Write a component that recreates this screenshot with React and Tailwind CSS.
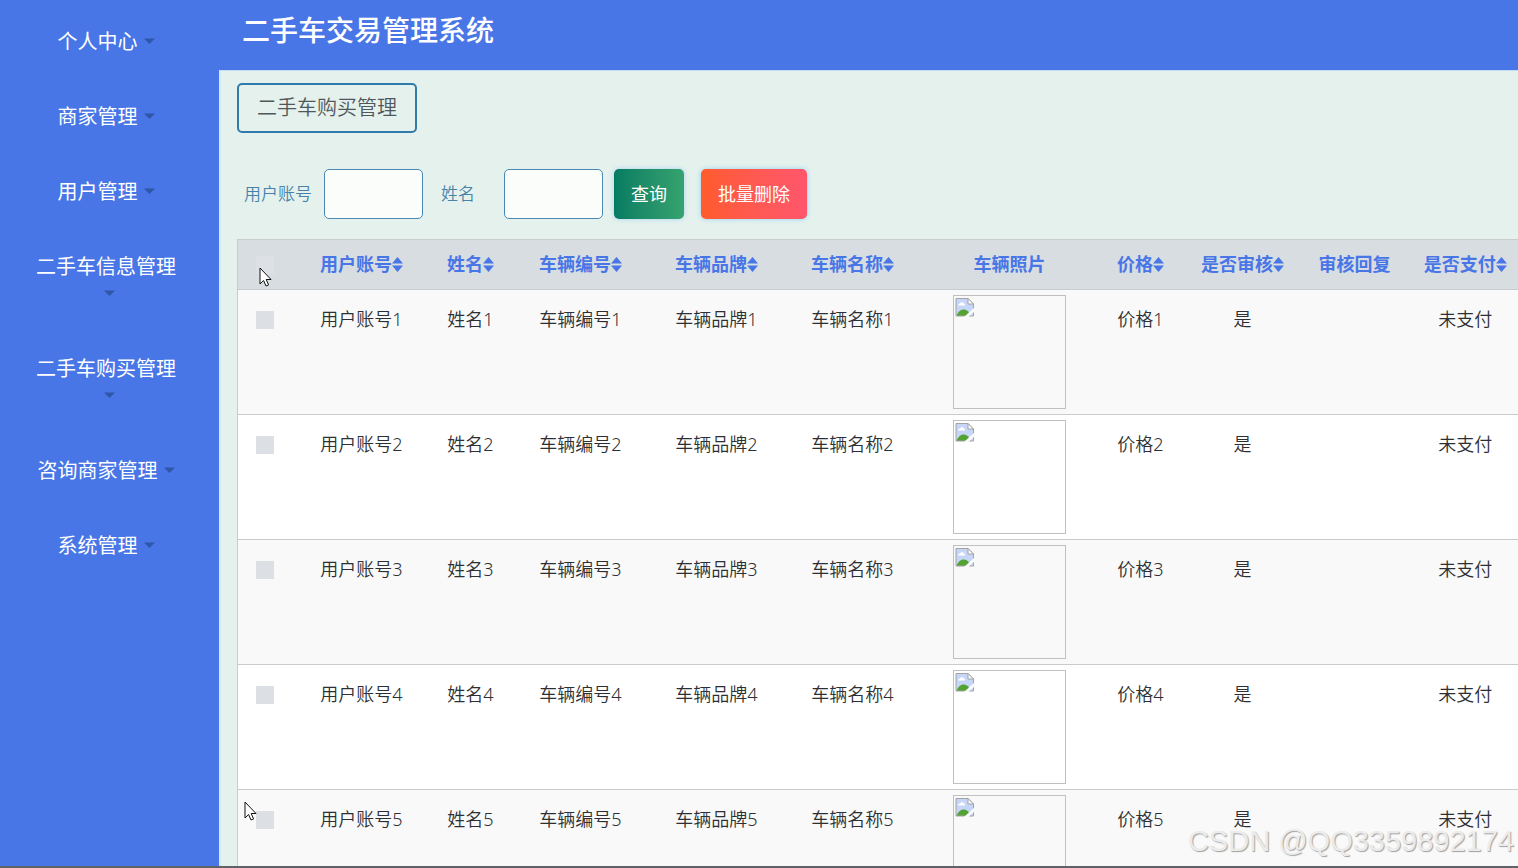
import React, { useState } from "react";
import clsx from "clsx";

const menus = [
  { title: "个人中心" },
  { title: "商家管理" },
  { title: "用户管理" },
  { title: "二手车信息管理", wrap: true },
  { title: "二手车购买管理", wrap: true },
  { title: "咨询商家管理" },
  { title: "系统管理" },
];

const columns = [
  { title: "用户账号", sortable: true, width: "w-[134px]" },
  { title: "姓名", sortable: true, width: "w-[84px]" },
  { title: "车辆编号", sortable: true, width: "w-[136px]" },
  { title: "车辆品牌", sortable: true, width: "w-[136px]" },
  { title: "车辆名称", sortable: true, width: "w-[136px]" },
  { title: "车辆照片", sortable: false, width: "w-[178px]" },
  { title: "价格", sortable: true, width: "w-[84px]" },
  { title: "是否审核", sortable: true, width: "w-[120px]" },
  { title: "审核回复", sortable: false, width: "w-[104px]" },
  { title: "是否支付", sortable: true, width: "w-[118px]" },
];

const rows = [1, 2, 3, 4, 5];

function Caret() {
  return (
    <svg className="mb-[6px] ml-[6px] inline-block h-[6px] w-[11px] align-middle" viewBox="0 0 11 6">
      <path d="M0 0.5h11L5.5 6z" fill="#2f57a8" />
    </svg>
  );
}

function SortIcon() {
  return (
    <svg className="h-[15px] w-[11px]" viewBox="0 0 11 15">
      <path d="M5.5 0L11 6.5H0zM0 8.5h11L5.5 15z" fill="#4876e6" />
    </svg>
  );
}

function BrokenImage() {
  return (
    <div className="mx-auto h-[114px] w-[113px] border border-[#c0c0c0] p-px">
      <svg className="h-[20px] w-[20px]" viewBox="0 0 20 20">
        <path d="M1 1.500h12l5.500 5.500v12H1z" fill="#c5d6f8" />
        <path d="M3 8.500a2 2 0 0 1 2-2 2.200 2.200 0 0 1 4 0 1.500 1.500 0 0 1 1 2z" fill="#fff" />
        <path d="M1.500 19c1.500-4.500 4.500-7 8-6.500 3 .3 5 3 6 6.500z" fill="#53a234" />
        <path d="M1 1.500h12l5.500 5.500v12H1z" fill="none" stroke="#a3a3a3" />
        <path d="M13 1.500V7h5.500z" fill="#fff" stroke="#a3a3a3" />
        <path d="M9 20L20 10v4L13.500 20z" fill="#fafafa" />
      </svg>
    </div>
  );
}

function Cursor({ className }) {
  return (
    <svg className={clsx("pointer-events-none absolute h-[20px] w-[13px]", className)} viewBox="0 0 13 20">
      <path
        d="M1 1v16l3.600-3.500L7 19l2.600-1.100-2.400-5.400H12z"
        fill="#fff"
        stroke="#111"
        strokeWidth="1"
      />
    </svg>
  );
}

function Sidebar() {
  return (
    <nav className="w-[219px] shrink-0 bg-[#4876e6] pt-1">
      <ul>
        {menus.map((menu) => (
          <li key={menu.title}>
            <button
              type="button"
              className="block w-full py-6 pr-[7px] text-center text-[20px] leading-[27px] text-white"
            >
              {menu.title}
              {menu.wrap && <br />}
              <Caret />
            </button>
          </li>
        ))}
      </ul>
    </nav>
  );
}

function Filters() {
  const [account, setAccount] = useState("");
  const [name, setName] = useState("");
  const input =
    "h-[50px] w-[99px] rounded-[5px] border border-[#4a89b4] bg-[#fbfdfa] px-3 text-[17px] outline-none";

  return (
    <form
      className="mt-9 flex items-center pl-[7px] text-[17px] font-[350] text-[#4583ab]"
      onSubmit={(e) => e.preventDefault()}
    >
      <label htmlFor="account" className="w-20">
        用户账号
      </label>
      <input
        id="account"
        type="text"
        className={input}
        value={account}
        onChange={(e) => setAccount(e.target.value)}
      />
      <label htmlFor="name" className="ml-[18px] w-[63px]">
        姓名
      </label>
      <input
        id="name"
        type="text"
        className={input}
        value={name}
        onChange={(e) => setName(e.target.value)}
      />
      <button
        type="submit"
        className="ml-[11px] h-[50px] rounded-[5px] bg-linear-to-r from-[#047c62] to-[#36a36f] px-[17px] text-[18px] font-normal text-white shadow-[0_0_5px_#a8d4f5]"
      >
        查询
      </button>
      <button
        type="button"
        className="ml-[17px] h-[50px] rounded-[5px] bg-linear-to-r from-[#ff5b2b] to-[#ff566c] px-[17px] text-[18px] font-normal text-white shadow-[0_0_5px_#8fd0fa]"
      >
        批量删除
      </button>
    </form>
  );
}

function Checkbox({ label, className }) {
  return (
    <input
      type="checkbox"
      aria-label={label}
      className={clsx("ml-[18px] block h-[18px] w-[18px] appearance-none", className)}
    />
  );
}

function OrdersTable() {
  const cell = "pt-4 leading-[27px]";

  return (
    <div className="mt-5 overflow-hidden">
      <table className="w-[1288px] table-fixed border-collapse border border-[#c9cccd] text-center font-['Noto_Sans','Noto_Sans_CJK_SC',sans-serif] text-[18px] text-[#2c3034]">
        <thead>
          <tr className="h-[50px] border-b border-[#c9cccd] bg-[#d8dde1] text-[#4876e6]">
            <th className="w-[57px]">
              <Checkbox label="全选" className="bg-[#dde1e5]" />
            </th>
            {columns.map((col) => (
              <th key={col.title} className={clsx("p-0 font-bold", col.width)}>
                <span className="inline-flex items-center whitespace-nowrap">
                  {col.title}
                  {col.sortable && <SortIcon />}
                </span>
              </th>
            ))}
          </tr>
        </thead>
        <tbody>
          {rows.map((n) => (
            <tr
              key={n}
              className="h-[125px] border-b border-[#c9cccd] bg-white align-top font-[350] odd:bg-[#f9f9f9]"
            >
              <td className="pt-[21px]">
                <Checkbox label={`选择${n}`} className="bg-[#dce0e5]" />
              </td>
              <td className={cell}>用户账号{n}</td>
              <td className={cell}>姓名{n}</td>
              <td className={cell}>车辆编号{n}</td>
              <td className={cell}>车辆品牌{n}</td>
              <td className={cell}>车辆名称{n}</td>
              <td className="pt-[5px]">
                <BrokenImage />
              </td>
              <td className={cell}>价格{n}</td>
              <td className={cell}>是</td>
              <td className={cell} />
              <td className={cell}>未支付</td>
            </tr>
          ))}
        </tbody>
      </table>
    </div>
  );
}

export default function App() {
  return (
    <div className="relative flex h-screen overflow-hidden border-b-2 border-[#5f6266] bg-[#e5f1ec] font-['Open_Sans','Noto_Sans_CJK_SC',sans-serif]">
      <Sidebar />
      <div className="min-w-0 flex-1">
        <header className="h-[70px] bg-[#4876e6] pt-[9px] pl-[23px]">
          <h1 className="text-[28px] leading-[42px] font-medium text-white">二手车交易管理系统</h1>
        </header>
        <main className="border-t border-l-2 border-t-[#c5dcf0] border-l-[#d3e9f6] pt-3 pl-4">
          <h2 className="inline-block rounded-[5px] border-2 border-[#2f7bab] px-[18px] text-[20px] leading-[46px] font-[350] text-[#50575c]">
            二手车购买管理
          </h2>
          <Filters />
          <OrdersTable />
        </main>
      </div>
      <Cursor className="top-[267px] left-[259px]" />
      <Cursor className="top-[801px] left-[244px]" />
      <div className="pointer-events-none absolute right-1 bottom-1 font-['Liberation_Sans',sans-serif] text-[29px] leading-[42px] text-[#ebebeb] [text-shadow:1px_1px_1px_#a0a0a0]">
        CSDN @QQ3359892174
      </div>
    </div>
  );
}
